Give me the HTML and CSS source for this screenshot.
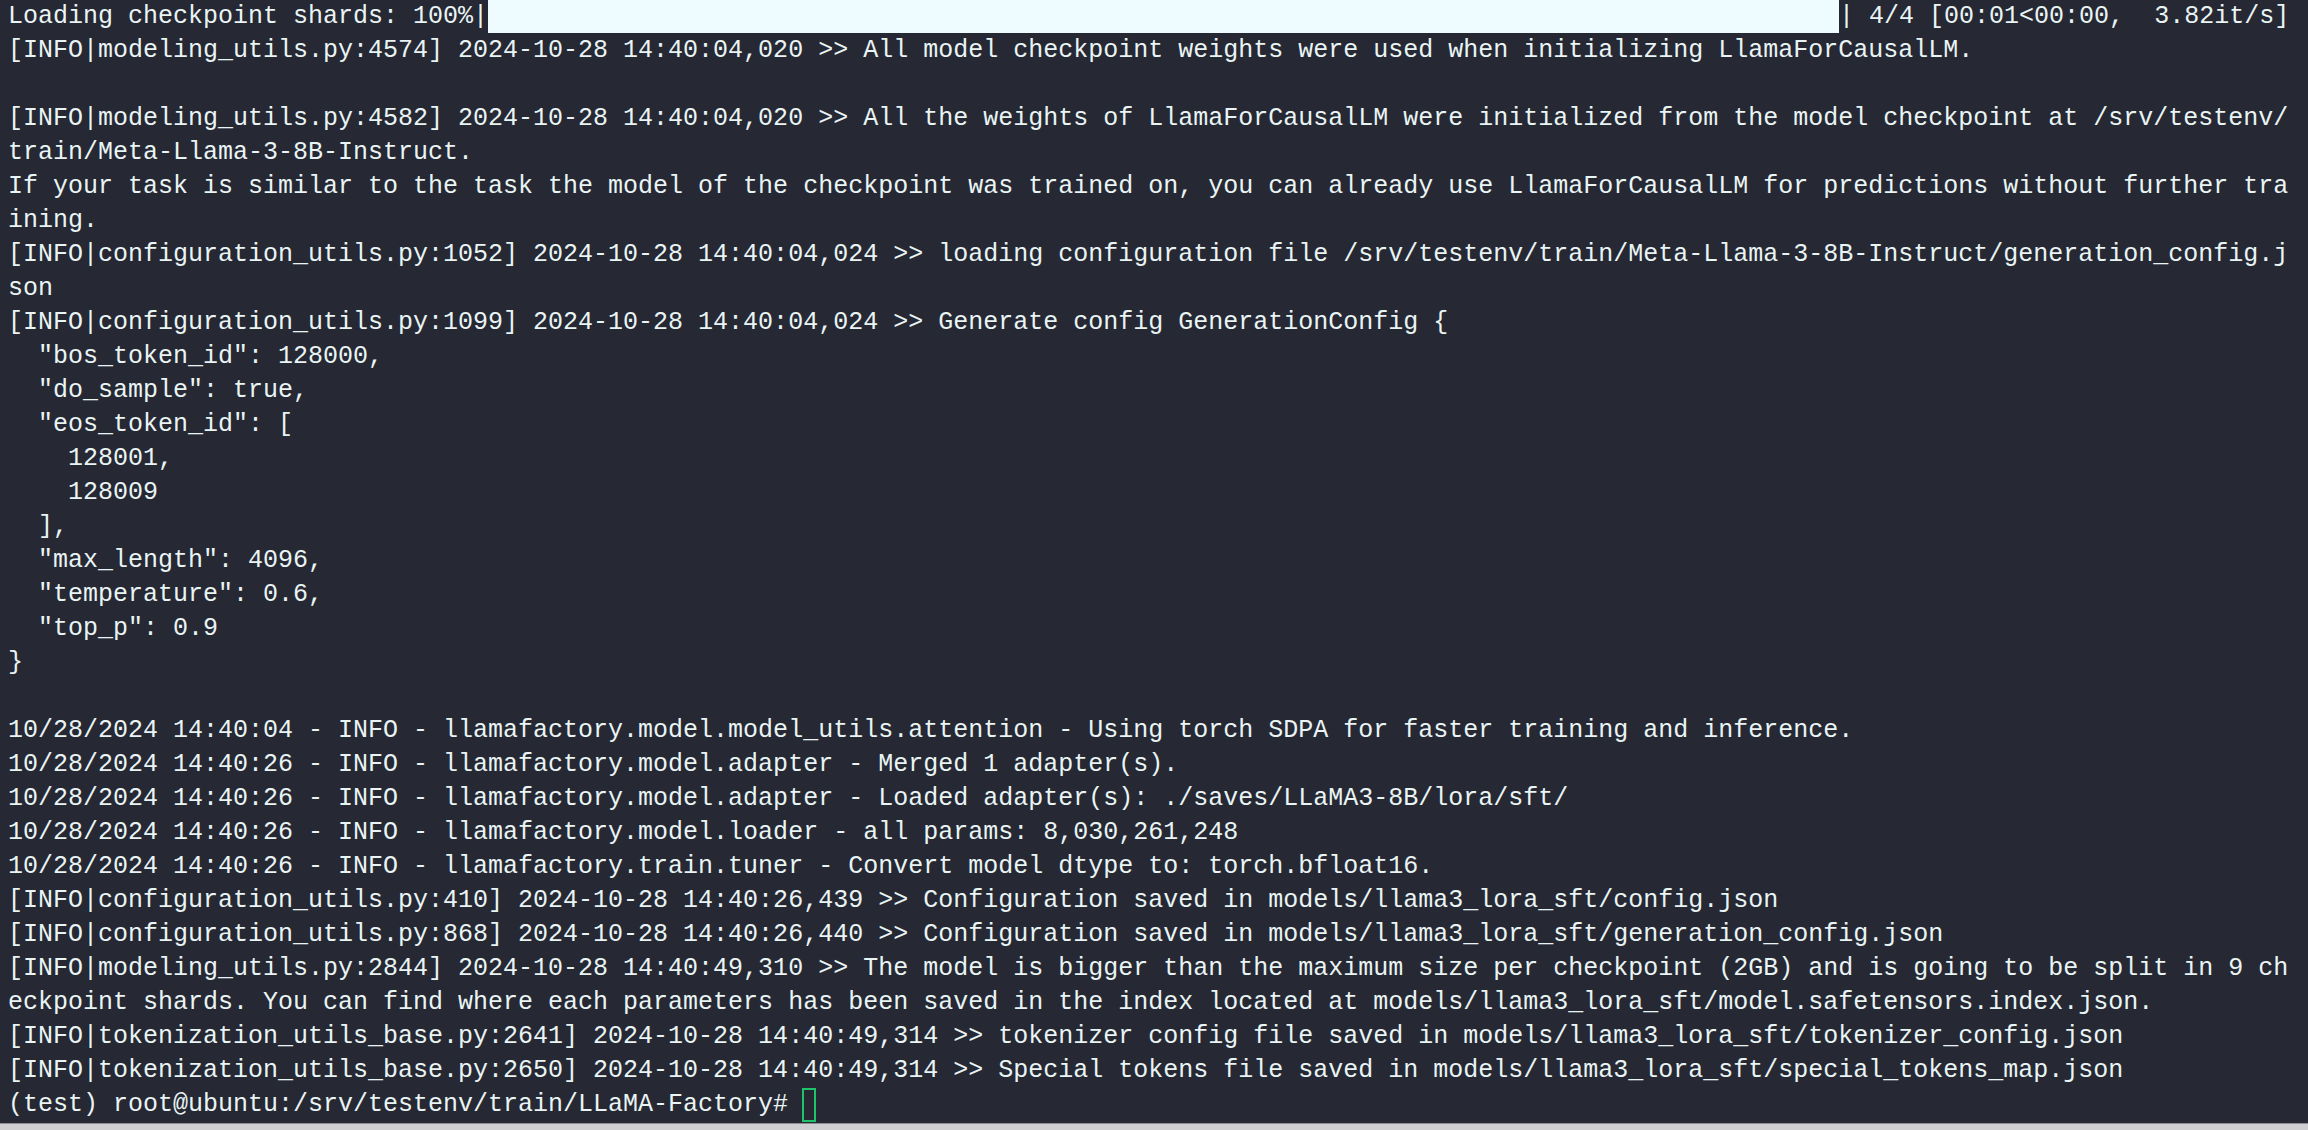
FILE: index.html
```html
<!DOCTYPE html>
<html>
<head>
<meta charset="utf-8">
<link rel="stylesheet" href="styles.css">
</head>
<body>
<div class="screen">
<pre class="term">Loading checkpoint shards: 100%|<span class="bar"></span>| 4/4 [00:01&lt;00:00,  3.82it/s]
[INFO|modeling_utils.py:4574] 2024-10-28 14:40:04,020 &gt;&gt; All model checkpoint weights were used when initializing LlamaForCausalLM.

[INFO|modeling_utils.py:4582] 2024-10-28 14:40:04,020 &gt;&gt; All the weights of LlamaForCausalLM were initialized from the model checkpoint at /srv/testenv/
train/Meta-Llama-3-8B-Instruct.
If your task is similar to the task the model of the checkpoint was trained on, you can already use LlamaForCausalLM for predictions without further tra
ining.
[INFO|configuration_utils.py:1052] 2024-10-28 14:40:04,024 &gt;&gt; loading configuration file /srv/testenv/train/Meta-Llama-3-8B-Instruct/generation_config.j
son
[INFO|configuration_utils.py:1099] 2024-10-28 14:40:04,024 &gt;&gt; Generate config GenerationConfig {
  "bos_token_id": 128000,
  "do_sample": true,
  "eos_token_id": [
    128001,
    128009
  ],
  "max_length": 4096,
  "temperature": 0.6,
  "top_p": 0.9
}

10/28/2024 14:40:04 - INFO - llamafactory.model.model_utils.attention - Using torch SDPA for faster training and inference.
10/28/2024 14:40:26 - INFO - llamafactory.model.adapter - Merged 1 adapter(s).
10/28/2024 14:40:26 - INFO - llamafactory.model.adapter - Loaded adapter(s): ./saves/LLaMA3-8B/lora/sft/
10/28/2024 14:40:26 - INFO - llamafactory.model.loader - all params: 8,030,261,248
10/28/2024 14:40:26 - INFO - llamafactory.train.tuner - Convert model dtype to: torch.bfloat16.
[INFO|configuration_utils.py:410] 2024-10-28 14:40:26,439 &gt;&gt; Configuration saved in models/llama3_lora_sft/config.json
[INFO|configuration_utils.py:868] 2024-10-28 14:40:26,440 &gt;&gt; Configuration saved in models/llama3_lora_sft/generation_config.json
[INFO|modeling_utils.py:2844] 2024-10-28 14:40:49,310 &gt;&gt; The model is bigger than the maximum size per checkpoint (2GB) and is going to be split in 9 ch
eckpoint shards. You can find where each parameters has been saved in the index located at models/llama3_lora_sft/model.safetensors.index.json.
[INFO|tokenization_utils_base.py:2641] 2024-10-28 14:40:49,314 &gt;&gt; tokenizer config file saved in models/llama3_lora_sft/tokenizer_config.json
[INFO|tokenization_utils_base.py:2650] 2024-10-28 14:40:49,314 &gt;&gt; Special tokens file saved in models/llama3_lora_sft/special_tokens_map.json
(test) root@ubuntu:/srv/testenv/train/LLaMA-Factory# <span class="cursor"></span></pre>
<div class="statusbar"></div>
</div>
</body>
</html>
```

FILE: styles.css
```css
html, body {
  margin: 0;
  padding: 0;
  background: #262833;
}

.screen {
  width: 2308px;
  height: 1130px;
  display: flex;
  flex-direction: column;
  overflow: hidden;
}

.term {
  flex: 1;
  margin: 0;
  padding: 0 0 0 8px;
  background: #262833;
  color: #e9f4f4;
  font-family: "Liberation Mono", "DejaVu Sans Mono", monospace;
  font-size: 25px;
  line-height: 34px;
  white-space: pre;
  overflow: hidden;
}

.bar {
  display: inline-block;
  width: 1351px;
  height: 33px;
  background: #effcff;
  vertical-align: top;
}

.cursor {
  display: inline-block;
  box-sizing: border-box;
  width: 14px;
  height: 34px;
  border: 2px solid #1fc36a;
  vertical-align: top;
  margin-left: -1px;
}

.statusbar {
  height: 6px;
  background: #cfcfd1;
  border-top: 1px solid #8d8e93;
}
```
